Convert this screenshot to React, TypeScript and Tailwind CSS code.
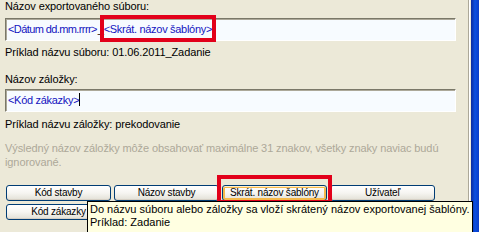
import React from 'react';

const FONT = "font-['Liberation_Sans',Arial,sans-serif]";

interface XpButtonProps {
  label: string;
  hot?: boolean;
}

const XpButton: React.FC<XpButtonProps> = ({ label, hot }) => (
  <button
    className={`block w-[105px] h-[16px] rounded-[3px] border border-[#003c74] bg-linear-to-b from-white via-[#f6f5f1] to-[#e2e0d6] text-[10px] leading-[14px] tracking-[-0.2px] whitespace-nowrap text-black ${
      hot
        ? 'shadow-[inset_0_1px_0_#fff0cf,inset_0_0_0_2px_#f5b94a]'
        : 'shadow-[inset_0_-1px_0_#d6d0c5]'
    }`}
  >
    {label}
  </button>
);

const XpInput: React.FC<{ children: React.ReactNode }> = ({ children }) => (
  <div className="w-[451px] h-[23px] border border-t-[#7a7868] border-l-[#7a7868] border-b-white border-r-white bg-[#f7fbff] shadow-[inset_1px_1px_0_#aca899] pl-[2px] text-[11px] leading-[21px] whitespace-nowrap tracking-[-0.3px]">
    {children}
  </div>
);

export default function App() {
  return (
    <div className={`${FONT} flex w-[479px] h-[232px] overflow-hidden bg-[#ece9d8] text-black`}>
      <div className="relative w-[471px] h-full flex">
        <div className="w-[469px] h-full border-r border-[#aca899] pl-[5px] text-[11px] tracking-[-0.1px]">
          <div className="leading-[13px]">Názov exportovaného súboru:</div>
          <div className="mt-[5px]">
            <XpInput>
              <span className="text-[#1414c0] tracking-[-0.6px]">&lt;Dátum dd.mm.rrrr&gt;</span>
              <span className="ml-[1px]">_</span>
              <span className="relative inline-block text-[#1414c0]">
                &lt;Skrát. názov šablóny&gt;
                <span className="absolute -left-[4px] -right-[4px] -top-[4px] -bottom-[2px] border-[4px] border-[#e2001a]" />
              </span>
            </XpInput>
          </div>
          <div className="mt-[4px] leading-[14px]">Príklad názvu súboru: 01.06.2011_Zadanie</div>
          <div className="mt-[13px] leading-[14px]">Názov záložky:</div>
          <div className="mt-[3px]">
            <XpInput>
              <span className="text-[#1414c0]">&lt;Kód zákazky&gt;</span>
              <span className="inline-block w-px h-[13px] bg-black align-[-2px]" />
            </XpInput>
          </div>
          <div className="mt-[5px] leading-[14px]">Príklad názvu záložky: prekodovanie</div>
          <div className="mt-[10px] leading-[14px] text-[#aca899]">
            Výsledný názov záložky môže obsahovať maximálne 31 znakov, všetky znaky naviac budú
            <br />
            ignorované.
          </div>
          <div className="mt-[16px] pl-[1px] flex gap-[3px]">
            <XpButton label="Kód stavby" />
            <XpButton label="Názov stavby" />
            <span className="relative block">
              <XpButton label="Skrát. názov šablóny" hot />
              <span className="absolute -left-[5px] -right-[5px] -top-[10px] -bottom-[3px] border-[4px] border-[#e2001a]" />
            </span>
            <XpButton label="Užívateľ" />
          </div>
          <div className="mt-[3px] pl-[1px] flex gap-[3px]">
            <XpButton label="Kód zákazky" />
          </div>
        </div>
        <div className="w-px h-full bg-white" />
        <div className="absolute left-[87px] top-[201px] w-[386px] h-[40px] border border-black bg-[#ffffe1] pl-[2px] pt-[1px] text-[11px] leading-[13px] whitespace-nowrap">
          <div>Do názvu súboru alebo záložky sa vloží skrátený názov exportovanej šablóny.</div>
          <div>Príklad: Zadanie</div>
        </div>
      </div>
      <div className="w-[8px] h-full bg-linear-to-r from-[#0a2a9e] via-[#0a4fe0] to-[#0a3cc8]" />
    </div>
  );
}
